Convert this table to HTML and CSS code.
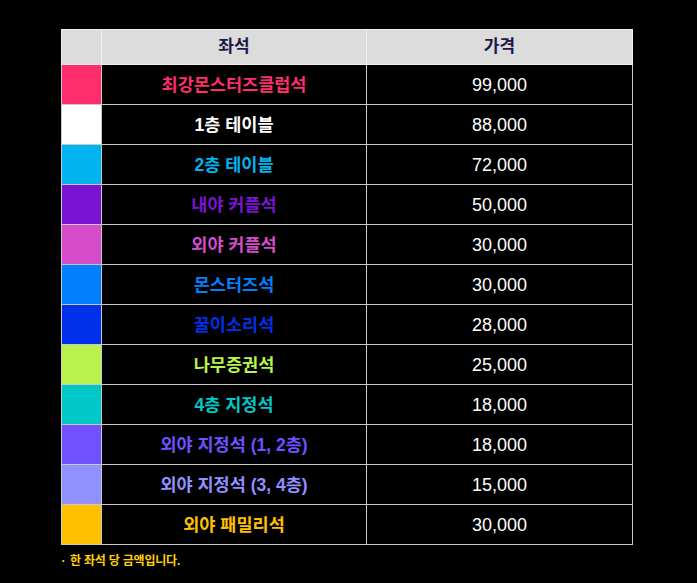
FILE: index.html
```html
<!DOCTYPE html>
<html lang="ko">
<head>
<meta charset="utf-8">
<link rel="stylesheet" href="styles.css">
</head>
<body>
<div class="page">
  <table class="price-table">
    <colgroup>
      <col class="c-swatch">
      <col class="c-seat">
      <col class="c-price">
    </colgroup>
    <thead>
      <tr>
        <th></th>
        <th>좌석</th>
        <th>가격</th>
      </tr>
    </thead>
    <tbody>
      <tr><td class="sw s1"></td><td class="seat t1">최강몬스터즈클럽석</td><td class="price">99,000</td></tr>
      <tr><td class="sw s2"></td><td class="seat t2">1층 테이블</td><td class="price">88,000</td></tr>
      <tr><td class="sw s3"></td><td class="seat t3">2층 테이블</td><td class="price">72,000</td></tr>
      <tr><td class="sw s4"></td><td class="seat t4">내야 커플석</td><td class="price">50,000</td></tr>
      <tr><td class="sw s5"></td><td class="seat t5">외야 커플석</td><td class="price">30,000</td></tr>
      <tr><td class="sw s6"></td><td class="seat t6">몬스터즈석</td><td class="price">30,000</td></tr>
      <tr><td class="sw s7"></td><td class="seat t7">꿀이소리석</td><td class="price">28,000</td></tr>
      <tr><td class="sw s8"></td><td class="seat t8">나무증권석</td><td class="price">25,000</td></tr>
      <tr><td class="sw s9"></td><td class="seat t9">4층 지정석</td><td class="price">18,000</td></tr>
      <tr><td class="sw s10"></td><td class="seat t10">외야 지정석 (1, 2층)</td><td class="price">18,000</td></tr>
      <tr><td class="sw s11"></td><td class="seat t11">외야 지정석 (3, 4층)</td><td class="price">15,000</td></tr>
      <tr><td class="sw s12"></td><td class="seat t12">외야 패밀리석</td><td class="price">30,000</td></tr>
    </tbody>
  </table>
  <p class="note"><span class="dot">·</span>한 좌석 당 금액입니다.</p>
</div>
</body>
</html>
```
FILE: styles.css
```css
html, body {
  margin: 0;
  padding: 0;
  background: #000;
}
body {
  font-family: "Liberation Sans", "Noto Sans CJK KR", sans-serif;
  color: #fff;
}
.page {
  padding: 29px 0 0 61px;
}
.price-table {
  border-collapse: collapse;
  table-layout: fixed;
  width: 571px;
}
.c-swatch { width: 40px; }
.c-seat { width: 265px; }
.c-price { width: 266px; }

.price-table th {
  height: 34px;
  padding: 0;
  background: #dcdcdc;
  border: 1px solid #efefef;
  color: #1c1a4a;
  font-size: 17px;
  line-height: 20px;
  font-weight: 700;
  text-align: center;
  vertical-align: middle;
}
.price-table td {
  height: 39px;
  padding: 0;
  border: 1px solid #c8c8c8;
  line-height: 20px;
  text-align: center;
  vertical-align: middle;
}
.seat {
  font-size: 17.5px;
  font-weight: 700;
}
.price {
  font-size: 18px;
  font-weight: 400;
  color: #fff;
}
.s1 { background: #ff2d6b; } .t1 { color: #ff2d6b; }
.s2 { background: #ffffff; } .t2 { color: #ffffff; }
.s3 { background: #00b4f0; } .t3 { color: #00b4f0; }
.s4 { background: #7a14d2; } .t4 { color: #7a14d2; }
.s5 { background: #d44cca; } .t5 { color: #d44cca; }
.s6 { background: #0080ff; } .t6 { color: #0080ff; }
.s7 { background: #0030ea; } .t7 { color: #0030ea; }
.s8 { background: #b8f24a; } .t8 { color: #b8f24a; }
.s9 { background: #00c8c8; } .t9 { color: #00c8c8; }
.s10 { background: #7050ff; } .t10 { color: #7050ff; }
.s11 { background: #9090ff; } .t11 { color: #9090ff; }
.s12 { background: #ffc000; } .t12 { color: #ffc000; }

.note {
  margin: 8px 0 0 -4px;
  font-size: 12px;
  font-weight: 700;
  color: #ffd200;
  letter-spacing: -0.2px;
  line-height: 16px;
}
.dot {
  display: inline-block;
  width: 13px;
  text-align: center;
}
```
